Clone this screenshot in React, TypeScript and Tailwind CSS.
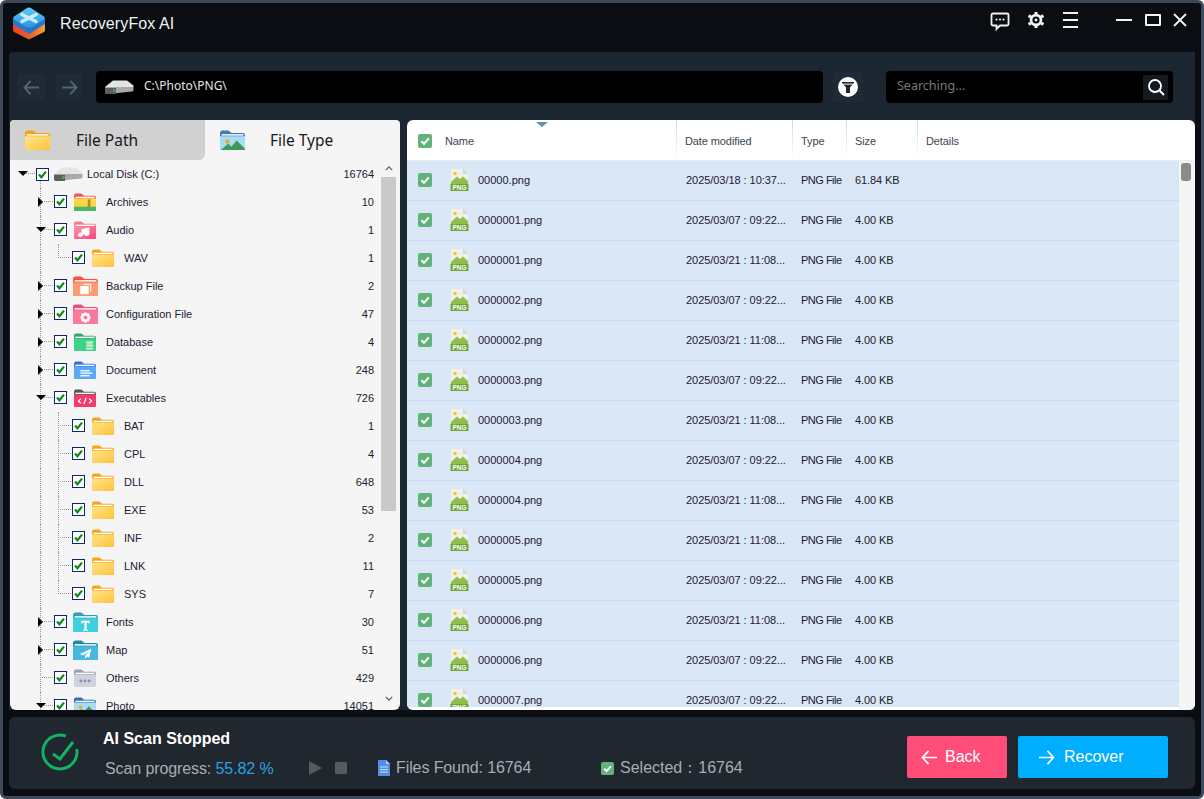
import React from "react";

const Tick = () => (
  <svg viewBox="0 0 13 13" className="w-[13px] h-[13px] block">
    <path d="M3 6.5 L5.4 9.2 L10 3.6" fill="none" stroke="#0a8a12" strokeWidth="2.2" />
  </svg>
);

const TreeCheck = () => (
  <span className="w-[13px] h-[13px] shrink-0 border border-[#0d2a66] bg-white flex items-center justify-center relative">
    <span className="absolute -left-px -top-px"><Tick /></span>
  </span>
);

const GreenCheck = ({ size = "w-[14px] h-[14px]" }: { size?: string }) => (
  <svg viewBox="0 0 14 14" className={size + " block shrink-0"}>
    <rect width="14" height="14" rx="2" fill="#62b37a" />
    <path d="M3.4 7.2 L6 9.8 L10.8 4.4" fill="none" stroke="#fff" strokeWidth="2" />
  </svg>
);

const Disk = ({ w = 30 }: { w?: number }) => (
  <svg viewBox="0 0 30 16" width={w} height={(w * 16) / 30} className="block shrink-0">
    <path d="M1 8 L9 1.5 H23 L29.5 6.5 L29.5 8 L8 12 Z" fill="#e4e4e4" />
    <path d="M1 8 H29.5 V11 Q29.5 12 28 12.5 L4 15 Q1 15 1 13 Z" fill="#a9a9a9" />
    <path d="M1 9 H12 V15 L4 15 Q1 15 1 13 Z" fill="#5e5e5e" />
    <rect x="9" y="10.5" width="2.5" height="2" fill="#3fbf5f" />
  </svg>
);

type Glyph = "zip" | "music" | "copy" | "gear" | "db" | "doc" | "code" | "T" | "plane" | "dots" | "photo" | "none";

const Folder = ({ tab, body, glyph = "none", w = 24, to }: { tab: string; body: string; glyph?: Glyph; w?: number; to?: string }) => {
  const id = "g" + body.replace("#", "") + w;
  return (
    <svg viewBox="0 0 24 20" width={w} height={(w * 20) / 24} className="block shrink-0">
      <defs>
        <linearGradient id={id} x1="0" y1="0" x2="1" y2="1">
          <stop offset="0" stopColor={body} />
          <stop offset="1" stopColor={to || body} />
        </linearGradient>
      </defs>
      <path d="M0 3 Q0 0.5 2 0.5 H8 L11 3 H22 Q24 3 24 5 V10 H0 Z" fill={tab} />
      <rect x="1.5" y="4" width="21" height="1.4" fill="#fff" />
      <path d="M0 6 H24 V18 Q24 20 22 20 H2 Q0 20 0 18 Z" fill={`url(#${id})`} />
      {glyph === "zip" && (
        <g>
          <rect x="0" y="6" width="24" height="5" fill="#ffd83d" />
          <rect x="0" y="11" width="24" height="4" fill="#f4d640" />
          <path d="M0 15 H24 V18 Q24 20 22 20 H2 Q0 20 0 18 Z" fill="#43b96a" />
          <rect x="15" y="7" width="3" height="10" fill="#b08a45" />
        </g>
      )}
      {glyph === "music" && <path d="M9 15 V9.5 L16 8 V14 M9 15 a2 1.6 0 1 1 -1 -1.4 M16 14 a2 1.6 0 1 1 -1 -1.4" stroke="#fff" strokeWidth="1.6" fill="#fff" />}
      {glyph === "copy" && (
        <g fill="none" stroke="#fff">
          <rect x="7.5" y="10" width="7" height="7" fill="#fff" />
          <path d="M10 8 H17 V15" strokeWidth="1" />
        </g>
      )}
      {glyph === "gear" && (
        <g>
          <circle cx="12" cy="13" r="3.2" fill="none" stroke="#fff" strokeWidth="2.4" />
          <path d="M12 8 V10 M12 16 V18 M7 13 H9 M15 13 H17 M8.5 9.5 L10 11 M14 15 L15.5 16.5 M8.5 16.5 L10 15 M14 11 L15.5 9.5" stroke="#fff" strokeWidth="1.6" />
        </g>
      )}
      {glyph === "db" && (
        <g fill="#bff0d2">
          <rect x="13" y="9" width="8" height="2.6" rx="1.2" />
          <rect x="13" y="12.4" width="8" height="2.6" rx="1.2" />
          <rect x="13" y="15.8" width="8" height="2.6" rx="1.2" />
        </g>
      )}
      {glyph === "doc" && (
        <g fill="#fff">
          <rect x="7" y="10" width="10" height="1.4" />
          <rect x="7" y="12.6" width="13" height="1.4" />
          <rect x="7" y="15.4" width="10" height="1.4" />
        </g>
      )}
      {glyph === "code" && <path d="M7.5 10.5 L4.8 13 L7.5 15.5 M16.5 10.5 L19.2 13 L16.5 15.5 M13.2 9.5 L10.8 16.5" fill="none" stroke="#fff" strokeWidth="1.4" />}
      {glyph === "T" && <path d="M8 8.5 H16 V11 H15 L14.6 10 H13 V16.5 L14.2 17 V18 H9.8 V17 L11 16.5 V10 H9.4 L9 11 H8 Z" fill="#fff" />}
      {glyph === "plane" && <path d="M17.5 8.5 L6.5 13.5 L10 14.8 L15 11 L11.5 15.5 V18 L13.5 16.2 L15.5 17 Z" fill="#fff" />}
      {glyph === "dots" && (
        <g fill="#8a8fa8">
          <circle cx="7.5" cy="13" r="1.6" />
          <circle cx="12" cy="13" r="1.6" />
          <circle cx="16.5" cy="13" r="1.6" />
        </g>
      )}
      {glyph === "photo" && (
        <g>
          <circle cx="7" cy="11" r="2" fill="#f5a623" />
          <path d="M0 20 L8 13 L11 16 L16 10 L24 18 V20 Z" fill="#3f9a5a" />
        </g>
      )}
    </svg>
  );
};

const YFolder = () => <Folder tab="#f5a318" body="#ffe58a" to="#ffc23a" w={22} />;

type Row = { label: string; count: string; level: 1 | 2; exp?: "r" | "d"; last?: boolean; tab?: string; body?: string; to?: string; glyph?: Glyph };

const rows: Row[] = [
  { label: "Archives", count: "10", level: 1, exp: "r", tab: "#f0525a", body: "#ffd83d", glyph: "zip" },
  { label: "Audio", count: "1", level: 1, exp: "d", tab: "#f77a8c", body: "#ff8da0", to: "#f9477e", glyph: "music" },
  { label: "WAV", count: "1", level: 2, last: true },
  { label: "Backup File", count: "2", level: 1, exp: "r", tab: "#f9503f", body: "#fb9b72", glyph: "copy" },
  { label: "Configuration File", count: "47", level: 1, exp: "r", tab: "#ea4f7e", body: "#fb7a9c", glyph: "gear" },
  { label: "Database", count: "4", level: 1, exp: "r", tab: "#2fa86c", body: "#3fd184", glyph: "db" },
  { label: "Document", count: "248", level: 1, exp: "r", tab: "#2e74e6", body: "#5da9f8", glyph: "doc" },
  { label: "Executables", count: "726", level: 1, exp: "d", tab: "#555555", body: "#f5386d", glyph: "code" },
  { label: "BAT", count: "1", level: 2 },
  { label: "CPL", count: "4", level: 2 },
  { label: "DLL", count: "648", level: 2 },
  { label: "EXE", count: "53", level: 2 },
  { label: "INF", count: "2", level: 2 },
  { label: "LNK", count: "11", level: 2 },
  { label: "SYS", count: "7", level: 2, last: true },
  { label: "Fonts", count: "30", level: 1, exp: "r", tab: "#2f9fb3", body: "#3fd0e0", glyph: "T" },
  { label: "Map", count: "51", level: 1, exp: "r", tab: "#23879f", body: "#47b8e2", glyph: "plane" },
  { label: "Others", count: "429", level: 1, tab: "#9a9fb0", body: "#cfd3e0", glyph: "dots" },
  { label: "Photo", count: "14051", level: 1, exp: "d", tab: "#2f6fb0", body: "#a8dcf5", glyph: "photo" },
];

const ExpR = () => <span className="absolute left-[28px] top-[9px] w-0 h-0 border-y-[5px] border-y-transparent border-l-[5px] border-l-black" />;
const ExpD = ({ left }: { left: string }) => <span className={"absolute top-[11px] w-0 h-0 border-x-[5px] border-x-transparent border-t-[5px] border-t-black " + left} />;

const TreeRow = ({ r }: { r: Row }) => (
  <div className="relative h-[28px] flex items-center text-[11px] text-[#1d2030]">
    <span className="absolute left-[30px] top-0 bottom-0 border-l border-dotted border-[#9a9a9a]" />
    {r.level === 2 && <span className={"absolute left-[48px] top-0 border-l border-dotted border-[#9a9a9a] " + (r.last ? "h-[14px]" : "h-[28px]")} />}
    <span className={"absolute top-[13px] border-t border-dotted border-[#9a9a9a] " + (r.level === 1 ? "left-[30px] w-[13px]" : "left-[48px] w-[13px]")} />
    {r.exp === "r" && <ExpR />}
    {r.exp === "d" && <ExpD left="left-[26px]" />}
    {r.level === 1 ? (
      <span className="pl-[44px] flex items-center">
        <TreeCheck />
        <span className="w-[24px] ml-[6px] flex justify-center">
          <Folder tab={r.tab!} body={r.body!} to={r.to} glyph={r.glyph} w={r.label === "Backup File" || r.label === "Configuration File" || r.label === "Fonts" || r.label === "Map" ? 25 : 22} />
        </span>
        <span className="ml-[9px]">{r.label}</span>
      </span>
    ) : (
      <span className="pl-[62px] flex items-center">
        <TreeCheck />
        <span className="ml-[7px]"><YFolder /></span>
        <span className="ml-[10px]">{r.label}</span>
      </span>
    )}
    <span className="ml-auto pr-[7px]">{r.count}</span>
  </div>
);

const files: [string, string, string][] = [
  ["00000.png", "2025/03/18 : 10:37...", "61.84 KB"],
  ["0000001.png", "2025/03/07 : 09:22...", "4.00 KB"],
  ["0000001.png", "2025/03/21 : 11:08...", "4.00 KB"],
  ["0000002.png", "2025/03/07 : 09:22...", "4.00 KB"],
  ["0000002.png", "2025/03/21 : 11:08...", "4.00 KB"],
  ["0000003.png", "2025/03/07 : 09:22...", "4.00 KB"],
  ["0000003.png", "2025/03/21 : 11:08...", "4.00 KB"],
  ["0000004.png", "2025/03/07 : 09:22...", "4.00 KB"],
  ["0000004.png", "2025/03/21 : 11:08...", "4.00 KB"],
  ["0000005.png", "2025/03/21 : 11:08...", "4.00 KB"],
  ["0000005.png", "2025/03/07 : 09:22...", "4.00 KB"],
  ["0000006.png", "2025/03/21 : 11:08...", "4.00 KB"],
  ["0000006.png", "2025/03/07 : 09:22...", "4.00 KB"],
  ["0000007.png", "2025/03/07 : 09:22...", "4.00 KB"],
];

const PngIcon = () => (
  <svg viewBox="0 0 19 22" className="w-[19px] h-[22px] block shrink-0">
    <path d="M1 0 H13 L18 5 V15 H1 Z" fill="#f1f1ea" />
    <path d="M13 0 L18 5 H13 Z" fill="#d6d6cc" />
    <circle cx="5" cy="4.5" r="1.7" fill="#f5c518" />
    <path d="M1 13 L7 7.5 L10 10 L13 7.5 L18 12 V16 H1 Z" fill="#8fbf4a" />
    <rect x="0.5" y="15" width="18" height="7" fill="#6fa63a" />
    <text x="9.5" y="21" textAnchor="middle" fontSize="6.4" fontWeight="700" fill="#fff" fontFamily="'Liberation Sans', sans-serif">PNG</text>
  </svg>
);

const Divider = () => <span className="absolute right-0 top-0 bottom-0 w-px bg-gradient-to-b from-[#bfe0f5] to-white" />;

const Logo = () => (
  <svg viewBox="0 0 32 33" className="w-[32px] h-[33px] block">
    <defs>
      <linearGradient id="lgBase" x1="0" y1="0" x2="1" y2="0">
        <stop offset="0" stopColor="#e8452c" />
        <stop offset="0.5" stopColor="#ea5a2a" />
        <stop offset="1" stopColor="#f0a52a" />
      </linearGradient>
      <linearGradient id="lgTop" x1="0" y1="0" x2="0" y2="1">
        <stop offset="0" stopColor="#58cdf2" />
        <stop offset="1" stopColor="#2b8fe0" />
      </linearGradient>
    </defs>
    <path d="M0 16 L16 26 L32 16 V23 Q32 24 31 25 L17 32 Q16 32.6 15 32 L1 25 Q0 24 0 23 Z" fill="url(#lgBase)" />
    <path d="M0 11 L16 22 L32 11 V17 L16 27 L0 17 Z" fill="#2577cc" />
    <path d="M1 9.5 L14.5 0.8 Q16 0 17.5 0.8 L31 9.5 Q32.4 11 31 12.5 L17.5 21.2 Q16 22 14.5 21.2 L1 12.5 Q-0.4 11 1 9.5 Z" fill="url(#lgTop)" />
    <path d="M9 7.5 L23 14.5 M23 7.5 L9 14.5" stroke="#c6ecf8" strokeWidth="3.6" strokeLinecap="round" />
  </svg>
);

const Gear = () => (
  <svg viewBox="0 0 20 20" className="w-[18px] h-[18px] block">
    <circle cx="10" cy="10" r="5.5" fill="none" stroke="#f2f2f2" strokeWidth="3" />
    <path d="M10 1 V4 M10 16 V19 M1.8 5.2 L4.4 6.7 M15.6 13.3 L18.2 14.8 M1.8 14.8 L4.4 13.3 M15.6 6.7 L18.2 5.2" stroke="#f2f2f2" strokeWidth="3.4" />
    <circle cx="10" cy="10" r="1.6" fill="#f2f2f2" />
  </svg>
);

export default function App() {
  return (
    <div className="w-[1204px] h-[799px] rounded-[6px] border-[3px] border-[#3d4859] bg-[#0a0e12] flex flex-col font-['Liberation_Sans',sans-serif] overflow-hidden">
      {/* title bar */}
      <div className="h-[49px] shrink-0 flex items-center pl-[10px] pr-[14px] text-white">
        <span className="-mt-[8px]"><Logo /></span>
        <span className="ml-[15px] text-[16px] text-[#f2f2f2] -mt-[7px] tracking-[0.1px]">RecoveryFox AI</span>
        <div className="ml-auto flex items-center -mt-[16px]">
          <svg viewBox="0 0 20 20" className="w-[20px] h-[20px] block mt-[3px]">
            <path d="M3 2.5 H17 Q18.5 2.5 18.5 4 V13 Q18.5 14.5 17 14.5 H10 L6.5 18 V14.5 H3 Q1.5 14.5 1.5 13 V4 Q1.5 2.5 3 2.5 Z" fill="none" stroke="#f2f2f2" strokeWidth="1.8" />
            <circle cx="6.5" cy="8.5" r="1.1" fill="#f2f2f2" />
            <circle cx="10" cy="8.5" r="1.1" fill="#f2f2f2" />
            <circle cx="13.5" cy="8.5" r="1.1" fill="#f2f2f2" />
          </svg>
          <span className="ml-[17px]"><Gear /></span>
          <span className="ml-[18px] w-[15px] flex flex-col gap-[5px]">
            <span className="h-[2px] bg-[#f2f2f2]" />
            <span className="h-[2px] bg-[#f2f2f2]" />
            <span className="h-[2px] bg-[#f2f2f2]" />
          </span>
          <span className="ml-[38px] w-[16px] h-[2px] bg-[#f2f2f2]" />
          <span className="ml-[13px] w-[16px] h-[12px] border-2 border-[#f2f2f2] rounded-[1px]" />
          <svg viewBox="0 0 14 14" className="ml-[12px] w-[14px] h-[14px] block">
            <path d="M1 1 L13 13 M13 1 L1 13" stroke="#f2f2f2" strokeWidth="1.8" />
          </svg>
        </div>
      </div>

      {/* toolbar and panels */}
      <div className="mx-[6px] h-[658px] shrink-0 bg-[#1b2631] flex flex-col rounded-tl-[4px]">
        <div className="h-[68px] shrink-0 flex items-center pl-[9px] pr-[22px] pt-[2px]">
          <span className="w-[27px] h-[26px] bg-[#1e2a35] flex items-center justify-center">
            <svg viewBox="0 0 18 16" className="w-[17px] h-[15px]"><path d="M8 1 L1.5 8 L8 15 M1.5 8 H17" fill="none" stroke="#56636f" strokeWidth="2" /></svg>
          </span>
          <span className="ml-[11px] w-[26px] h-[26px] bg-[#1e2a35] flex items-center justify-center">
            <svg viewBox="0 0 18 16" className="w-[17px] h-[15px]"><path d="M10 1 L16.5 8 L10 15 M16.5 8 H1" fill="none" stroke="#56636f" strokeWidth="2" /></svg>
          </span>
          <div className="ml-[14px] w-[727px] h-[32px] bg-black rounded-[4px] flex items-center pl-[8px]">
            <Disk />
            <span className="ml-[10px] -mt-[2px] text-[12px] text-[#e4e4e4] font-['Noto_Sans',sans-serif]">C:\Photo\PNG\</span>
          </div>
          <span className="ml-[10px] w-[30px] h-[30px] bg-[#1e2a35] flex items-center justify-center">
            <svg viewBox="0 0 20 20" className="w-[20px] h-[20px] block">
              <circle cx="10" cy="10" r="10" fill="#fff" />
              <path d="M3.5 5 H16.5 L12 10.5 V16 H8 V10.5 Z" fill="#1b2631" />
              <rect x="5.5" y="6.6" width="9" height="1" fill="#fff" />
            </svg>
          </span>
          <div className="ml-[23px] w-[287px] h-[32px] bg-black rounded-[4px] flex items-center pl-[11px] pr-[5px]">
            <span className="text-[12.5px] -mt-[2px] text-[#7a7a7a] font-['Noto_Sans',sans-serif]">Searching...</span>
            <span className="ml-auto w-[25px] h-[25px] bg-[#141a20] flex items-center justify-center">
              <svg viewBox="0 0 18 18" className="w-[18px] h-[18px]"><circle cx="8" cy="8" r="6" fill="none" stroke="#fff" strokeWidth="1.8" /><path d="M12.5 12.5 L17 17" stroke="#fff" strokeWidth="2" /></svg>
            </span>
          </div>
        </div>

        <div className="h-[590px] flex pl-px gap-[7px]">
          {/* left panel */}
          <div className="w-[390px] h-full bg-[#f5f5f5] rounded-t-[4px] rounded-b-[6px] flex flex-col overflow-hidden">
            <div className="h-[40px] shrink-0 flex">
              <div className="w-[195px] bg-[#d1d1d1] rounded-tl-[4px] rounded-br-[6px] flex items-center pl-[15px] text-[#15181d]">
                <Folder tab="#f5a318" body="#ffe58a" to="#ffc23a" w={25} />
                <span className="ml-[26px] mt-[2px] font-['Noto_Sans',sans-serif] text-[15.5px]">File Path</span>
              </div>
              <div className="w-[195px] flex items-center pl-[15px] text-[#15181d]">
                <Folder tab="#3d7ab8" body="#a8dcf5" glyph="photo" w={25} />
                <span className="ml-[25px] mt-[2px] font-['Noto_Sans',sans-serif] text-[15.5px]">File Type</span>
              </div>
            </div>
            <div className="flex-1 flex min-h-0">
              <div className="w-[371px] overflow-hidden">
                <div className="relative h-[28px] flex items-center text-[11px] text-[#1d2030]">
                  <span className="absolute left-[30px] top-[14px] bottom-0 border-l border-dotted border-[#9a9a9a]" />
                  <span className="absolute left-[12px] top-[13px] w-[13px] border-t border-dotted border-[#9a9a9a]" />
                  <ExpD left="left-[8px]" />
                  <span className="pl-[26px] flex items-center">
                    <TreeCheck />
                    <span className="ml-[4px]"><Disk /></span>
                    <span className="ml-[4px]">Local Disk (C:)</span>
                  </span>
                  <span className="ml-auto pr-[7px]">16764</span>
                </div>
                {rows.map((r, i) => <TreeRow key={i} r={r} />)}
              </div>
              <div className="w-[19px] flex flex-col items-start shrink-0 pb-[3px]">
                <div className="h-[17px] w-[15px] flex items-center justify-center">
                  <svg viewBox="0 0 10 6" className="w-[8px] h-[5px]"><path d="M1 5 L5 1 L9 5" fill="none" stroke="#606060" strokeWidth="1.6" /></svg>
                </div>
                <div className="h-[334px] w-[15px] bg-[#c9c9c9]" />
                <div className="flex-1" />
                <div className="h-[17px] w-[15px] flex items-center justify-center">
                  <svg viewBox="0 0 10 6" className="w-[8px] h-[5px]"><path d="M1 1 L5 5 L9 1" fill="none" stroke="#606060" strokeWidth="1.6" /></svg>
                </div>
              </div>
            </div>
          </div>

          {/* right panel */}
          <div className="w-[788px] h-full bg-white rounded-[6px] flex flex-col overflow-hidden text-[#1d2030]">
            <div className="h-[41px] shrink-0 flex text-[11px] tracking-[-0.1px] text-[#3c4450] border-b border-[#e6edf3]">
              <div className="relative w-[270px] flex items-center pl-[11px] pt-[2px]">
                <GreenCheck />
                <span className="ml-[13px]">Name</span>
                <span className="absolute left-[129px] top-[2px] w-0 h-0 border-x-[6px] border-x-transparent border-t-[5px] border-t-[#5c97a6]" />
                <Divider />
              </div>
              <div className="relative w-[116px] flex items-center pl-[8px] pt-[2px]">Date modified<Divider /></div>
              <div className="relative w-[54px] flex items-center pl-[8px] pt-[2px]">Type<Divider /></div>
              <div className="relative w-[71px] flex items-center pl-[8px] pt-[2px]">Size<Divider /></div>
              <div className="flex items-center pl-[8px] pt-[2px]">Details</div>
            </div>
            <div className="flex flex-1 min-h-0">
              <div className="w-[772px] overflow-hidden pb-[3px] flex flex-col">
                <div className="overflow-hidden flex-1">
                  {files.map(([n, d, s], i) => (
                    <div key={i} className="h-[40px] bg-[#dae7f7] border-b border-[#c6daf0] flex items-center text-[11px] text-[#1d2030]">
                      <span className="w-[270px] flex items-center pl-[11px] shrink-0">
                        <span className="-mt-[1px]"><GreenCheck /></span>
                        <span className="ml-[18px] -mt-[1px]"><PngIcon /></span>
                        <span className="ml-[9px]">{n}</span>
                      </span>
                      <span className="w-[116px] pl-[9px] shrink-0 whitespace-nowrap tracking-[-0.05px]">{d}</span>
                      <span className="w-[54px] pl-[8px] shrink-0 whitespace-nowrap tracking-[-0.5px]">PNG File</span>
                      <span className="pl-[8px] whitespace-nowrap tracking-[-0.1px]">{s}</span>
                    </div>
                  ))}
                </div>
              </div>
              <div className="w-[16px] bg-[#f5f5f5] shrink-0 pt-[2px] pl-[2px]">
                <div className="w-[10px] h-[18px] rounded-[3px] bg-[#8b8b8b]" />
              </div>
            </div>
          </div>
        </div>
      </div>

      {/* status bar */}
      <div className="mx-[6px] mt-[7px] h-[72px] shrink-0 bg-[#21272e] rounded-[6px] flex items-center pl-[32px] pr-[27px] text-[#a8adb3] text-[16px]">
        <svg viewBox="0 0 38 38" className="w-[38px] h-[38px] block shrink-0 -mt-[2px]">
          <path d="M24.8 3 A17 17 0 1 0 35.7 16" fill="none" stroke="#0fb565" strokeWidth="3" />
          <path d="M12 21 L19 26 L32 9" fill="none" stroke="#0fb565" strokeWidth="3" />
        </svg>
        <div className="ml-[24px] w-[180px] flex flex-col">
          <span className="text-white font-bold text-[16px] leading-[20px] mt-[1px]">AI Scan Stopped</span>
          <span className="mt-[10px] ml-[2px] leading-[20px] whitespace-nowrap tracking-[-0.1px]">Scan progress: <span className="text-[#2a9fe6]">55.82 %</span></span>
        </div>
        <div className="ml-[26px] flex items-center self-end pb-[11px]">
          <span className="w-0 h-0 border-y-[7px] border-y-transparent border-l-[13px] border-l-[#565b60]" />
          <span className="ml-[13px] w-[12px] h-[12px] bg-[#565b60] rounded-[1px]" />
          <svg viewBox="0 0 13 16" className="ml-[30px] w-[13px] h-[16px] block">
            <path d="M1 0 H9 L13 4 V16 H1 Z" fill="#4f8fe8" />
            <path d="M9 0 L13 4 H9 Z" fill="#a9c9f5" />
            <path d="M3 7 H11 M3 9.5 H11 M3 12 H11" stroke="#cfe0f8" strokeWidth="1" />
          </svg>
          <span className="ml-[6px] w-[205px] leading-[20px] tracking-[-0.1px]">Files Found: 16764</span>
          <GreenCheck size="w-[13px] h-[13px]" />
          <span className="ml-[6px] leading-[20px] whitespace-nowrap">Selected：16764</span>
        </div>
        <div className="ml-auto flex items-center gap-[11px] mt-[8px]">
          <div className="w-[100px] h-[42px] bg-[#ff4d7a] rounded-[2px] flex items-center pl-[14px] text-white">
            <svg viewBox="0 0 18 16" className="w-[17px] h-[15px] mr-[7px]"><path d="M8 1 L1.5 8 L8 15 M1.5 8 H17" fill="none" stroke="#fff" strokeWidth="1.8" /></svg>
            Back
          </div>
          <div className="w-[150px] h-[42px] bg-[#00aeff] rounded-[2px] flex items-center pl-[20px] text-white">
            <svg viewBox="0 0 18 16" className="w-[17px] h-[15px] mr-[9px]"><path d="M10 1 L16.5 8 L10 15 M16.5 8 H1" fill="none" stroke="#fff" strokeWidth="1.8" /></svg>
            Recover
          </div>
        </div>
      </div>
    </div>
  );
}
